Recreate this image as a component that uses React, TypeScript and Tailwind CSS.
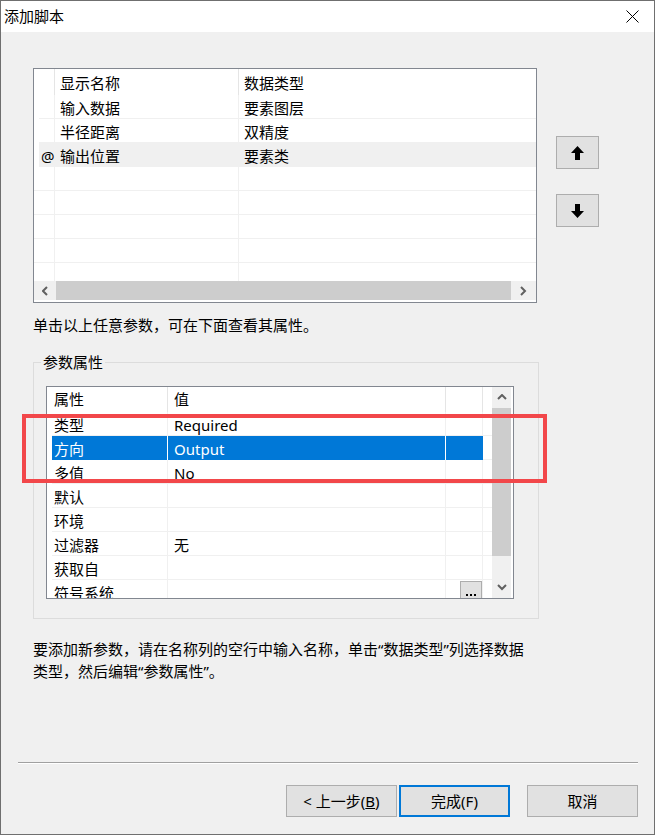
import React from "react"

// 字体：拉丁用 Noto Sans，中文回落到 Noto Sans CJK SC
const FONT = "[font-family:'Noto_Sans','Noto_Sans_CJK_SC',sans-serif]"

type ParamRow = { mark?: string; name?: string; type?: string; active?: boolean }

const paramRows: ParamRow[] = [
  { name: "输入数据", type: "要素图层" },
  { name: "半径距离", type: "双精度" },
  { mark: "@", name: "输出位置", type: "要素类", active: true },
  {},
  {},
  {},
  {},
  {},
]

type PropRow = { key: string; value?: string; selected?: boolean; browse?: boolean }

const propRows: PropRow[] = [
  { key: "类型", value: "Required" },
  { key: "方向", value: "Output", selected: true },
  { key: "多值", value: "No" },
  { key: "默认" },
  { key: "环境" },
  { key: "过滤器", value: "无" },
  { key: "获取自" },
  { key: "符号系统", browse: true },
]

function Chevron({ dir }: { dir: "left" | "right" | "up" | "down" }) {
  const pts = {
    left: "5,1 1,5 5,9",
    right: "1,1 5,5 1,9",
    up: "1,5 5,1 9,5",
    down: "1,1 5,5 9,1",
  }[dir]
  const horiz = dir === "left" || dir === "right"
  return (
    <svg width={horiz ? 7 : 10} height={horiz ? 10 : 7} viewBox={horiz ? "0 0 7 10" : "0 0 10 7"}>
      <polyline points={pts} fill="none" stroke="#606060" strokeWidth="2" />
    </svg>
  )
}

function ArrowButton({ down }: { down?: boolean }) {
  return (
    <div className="w-[43px] h-[33px] bg-[#e1e1e1] border border-[#adadad] flex items-center justify-center">
      <svg width="13" height="14" viewBox="0 0 13 14" className={down ? "rotate-180" : ""}>
        <polygon points="6.5,0 13,7 9,7 9,14 4,14 4,7 0,7" fill="#000" />
      </svg>
    </div>
  )
}

// 参数列表（上方表格）
function ParamTable() {
  return (
    <div className="w-[504px] h-[235px] border border-[#828790] bg-white flex flex-col">
      <div className="h-[212px] overflow-hidden">
        <div className="grid grid-cols-[21px_184px_1fr] h-[26px] leading-[26px]">
          <div className="border-r border-[#e5e5e5]" />
          <div className="border-r border-[#e5e5e5] pl-[5px] pt-[1px]">显示名称</div>
          <div className="pl-[5px] pt-[1px]">数据类型</div>
        </div>
        {paramRows.map((row, i) => (
          <div
            key={i}
            className={`grid grid-cols-[21px_184px_1fr] h-[24px] leading-[22px] border-b border-[#f0f0f0] ${
              row.active ? "bg-[#f0f0f0]" : ""
            }`}
          >
            <div className="border-r border-[#f0f0f0] border-l-[5px] border-l-white pl-[2px] pt-[2px]">{row.mark}</div>
            <div className="border-r border-[#f0f0f0] pl-[5px] pt-[2px]">{row.name}</div>
            <div className="pl-[5px] pt-[2px]">{row.type}</div>
          </div>
        ))}
      </div>
      <div className="h-[19px] flex bg-[#f0f0f0]">
        <div className="w-[22px] flex items-center justify-center">
          <Chevron dir="left" />
        </div>
        <div className="flex-1 bg-[#cdcdcd]" />
        <div className="w-[25px] flex items-center justify-center">
          <Chevron dir="right" />
        </div>
      </div>
    </div>
  )
}

// 参数属性表格
function PropTable() {
  return (
    <div className="w-[468px] h-[213px] border border-[#828790] bg-white flex">
      <div className="flex-1 h-[211px] overflow-hidden">
        <div className="grid grid-cols-[121px_278px_37px_1fr] h-[25px] leading-[25px]">
          <div className="border-r border-[#e5e5e5] pl-[7px]">属性</div>
          <div className="border-r border-[#e5e5e5] pl-[6px]">值</div>
          <div className="border-r border-[#e5e5e5]" />
          <div />
        </div>
        {propRows.map((row) => (
          <div
            key={row.key}
            className="grid grid-cols-[121px_278px_37px_1fr] h-[24px] leading-[22px] border-b border-[#f0f0f0]"
          >
            <div
              className={`border-l-[5px] border-l-white pl-[2px] pt-[2px] border-r ${
                row.selected ? "bg-[#0078d7] text-white border-r-white" : "border-r-[#f0f0f0]"
              }`}
            >
              {row.key}
            </div>
            <div
              className={`border-r pl-[6px] pt-[2px] ${
                row.selected ? "bg-[#0078d7] text-white border-r-white" : "border-r-[#f0f0f0]"
              }`}
            >
              {row.value}
            </div>
            <div
              className={`border-r flex justify-end pt-[1px] ${
                row.selected ? "bg-[#0078d7] border-r-[#0078d7]" : "border-r-[#f0f0f0]"
              }`}
            >
              {row.browse && (
                <div className="w-[22px] h-[22px] shrink-0 bg-[#e1e1e1] border border-[#adadad] flex items-end justify-center gap-[2px] pb-[6px]">
                  <span className="w-[2px] h-[2px] bg-black" />
                  <span className="w-[2px] h-[2px] bg-black" />
                  <span className="w-[2px] h-[2px] bg-black" />
                </div>
              )}
            </div>
            <div />
          </div>
        ))}
      </div>
      <div className="w-[19px] h-[211px] bg-[#f0f0f0] flex flex-col">
        <div className="h-[21px] flex items-center justify-center">
          <Chevron dir="up" />
        </div>
        <div className="h-[148px] bg-[#cdcdcd]" />
        <div className="flex-1" />
        <div className="h-[21px] flex items-center justify-center">
          <Chevron dir="down" />
        </div>
      </div>
      <div className="w-[2px]" />
    </div>
  )
}

function DialogButton({ children, primary }: { children: React.ReactNode; primary?: boolean }) {
  return (
    <div
      className={`w-[111px] h-[32px] bg-[#e1e1e1] flex items-center justify-center ${
        primary ? "border-2 border-[#0078d7]" : "border border-[#adadad]"
      }`}
    >
      {children}
    </div>
  )
}

export default function App() {
  return (
    <div
      className={`relative w-[655px] h-[835px] border border-[#6f6f6f] bg-[#f0f0f0] flex flex-col text-[15px] text-black ${FONT}`}
    >
      {/* 标题栏 */}
      <div className="h-[31px] bg-white flex items-center justify-between pl-[3px] pr-[15px]">
        <span>添加脚本</span>
        <svg width="13" height="13" viewBox="0 0 13 13">
          <path d="M0.5 0.5 L12.5 12.5 M12.5 0.5 L0.5 12.5" stroke="#000" strokeWidth="1" />
        </svg>
      </div>

      <div className="px-[32px]">
        <div className="mt-[36px] flex">
          <ParamTable />
          <div className="ml-[19px] mt-[68px] flex flex-col gap-[25px]">
            <ArrowButton />
            <ArrowButton down />
          </div>
        </div>

        <p className="mt-[12px] leading-[20px]">单击以上任意参数，可在下面查看其属性。</p>

        <div className="relative mt-[27px] w-[506px] h-[257px] border border-[#dcdcdc] pt-[23px] pl-[12px]">
          <span className="absolute -top-[11px] left-[7px] px-[2px] bg-[#f0f0f0] leading-[20px]">参数属性</span>
          <PropTable />
        </div>

        <p className="mt-[19px] leading-[22px]">
          要添加新参数，请在名称列的空行中输入名称，单击“数据类型”列选择数据
          <br />
          类型，然后编辑“参数属性”。
        </p>
      </div>

      <div className="mt-auto ml-[17px] mr-[16px] pb-[17px]">
        <div className="h-px bg-[#a0a0a0]" />
        <div className="h-px bg-white" />
        <div className="mt-[21px] flex justify-end">
          <DialogButton>
            &lt; 上一步(<span className="underline">B</span>)
          </DialogButton>
          <div className="ml-[2px]">
            <DialogButton primary>完成(F)</DialogButton>
          </div>
          <div className="ml-[17px]">
            <DialogButton>取消</DialogButton>
          </div>
        </div>
      </div>

      {/* 红色标注框 */}
      <div className="absolute left-[21px] top-[413px] w-[525px] h-[69px] border-4 border-[#f2474a]" />
    </div>
  )
}
